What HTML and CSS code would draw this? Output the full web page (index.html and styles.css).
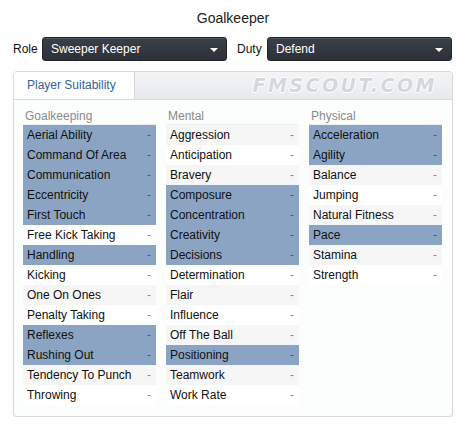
FILE: index.html
```html
<!DOCTYPE html>
<html>
<head>
<meta charset="utf-8">
<link rel="stylesheet" href="styles.css">
</head>
<body>
<div class="page">
  <h1 class="title">Goalkeeper</h1>
  <div class="controls">
    <span class="label">Role</span>
    <div class="select"><span>Sweeper Keeper</span><span class="caret"></span></div>
    <span class="label duty">Duty</span>
    <div class="select"><span>Defend</span><span class="caret"></span></div>
  </div>
  <div class="panel">
    <div class="tabs">
      <div class="tab">Player Suitability</div>
      <div class="watermark">FMSCOUT.COM</div>
    </div>
    <div class="columns">
      <div class="col">
        <div class="head">Goalkeeping</div>
        <div class="row hl"><span>Aerial Ability</span><span class="d">-</span></div>
        <div class="row hl"><span>Command Of Area</span><span class="d">-</span></div>
        <div class="row hl"><span>Communication</span><span class="d">-</span></div>
        <div class="row hl"><span>Eccentricity</span><span class="d">-</span></div>
        <div class="row hl"><span>First Touch</span><span class="d">-</span></div>
        <div class="row"><span>Free Kick Taking</span><span class="d">-</span></div>
        <div class="row hl"><span>Handling</span><span class="d">-</span></div>
        <div class="row"><span>Kicking</span><span class="d">-</span></div>
        <div class="row"><span>One On Ones</span><span class="d">-</span></div>
        <div class="row"><span>Penalty Taking</span><span class="d">-</span></div>
        <div class="row hl"><span>Reflexes</span><span class="d">-</span></div>
        <div class="row hl"><span>Rushing Out</span><span class="d">-</span></div>
        <div class="row"><span>Tendency To Punch</span><span class="d">-</span></div>
        <div class="row"><span>Throwing</span><span class="d">-</span></div>
      </div>
      <div class="col">
        <div class="head">Mental</div>
        <div class="row"><span>Aggression</span><span class="d">-</span></div>
        <div class="row"><span>Anticipation</span><span class="d">-</span></div>
        <div class="row"><span>Bravery</span><span class="d">-</span></div>
        <div class="row hl"><span>Composure</span><span class="d">-</span></div>
        <div class="row hl"><span>Concentration</span><span class="d">-</span></div>
        <div class="row hl"><span>Creativity</span><span class="d">-</span></div>
        <div class="row hl"><span>Decisions</span><span class="d">-</span></div>
        <div class="row"><span>Determination</span><span class="d">-</span></div>
        <div class="row"><span>Flair</span><span class="d">-</span></div>
        <div class="row"><span>Influence</span><span class="d">-</span></div>
        <div class="row"><span>Off The Ball</span><span class="d">-</span></div>
        <div class="row hl"><span>Positioning</span><span class="d">-</span></div>
        <div class="row"><span>Teamwork</span><span class="d">-</span></div>
        <div class="row"><span>Work Rate</span><span class="d">-</span></div>
      </div>
      <div class="col">
        <div class="head">Physical</div>
        <div class="row hl"><span>Acceleration</span><span class="d">-</span></div>
        <div class="row hl"><span>Agility</span><span class="d">-</span></div>
        <div class="row"><span>Balance</span><span class="d">-</span></div>
        <div class="row"><span>Jumping</span><span class="d">-</span></div>
        <div class="row"><span>Natural Fitness</span><span class="d">-</span></div>
        <div class="row hl"><span>Pace</span><span class="d">-</span></div>
        <div class="row"><span>Stamina</span><span class="d">-</span></div>
        <div class="row"><span>Strength</span><span class="d">-</span></div>
      </div>
    </div>
  </div>
</div>
</body>
</html>
```

FILE: styles.css
```css
html, body {
  margin: 0;
  padding: 0;
  background: #ffffff;
}
body {
  font-family: "Liberation Sans", Arial, sans-serif;
  color: #111;
  font-size: 12px;
}
.page {
  width: 466px;
  padding: 0 13px;
  box-sizing: border-box;
}
.title {
  margin: 0;
  padding-top: 10px;
  height: 28px;
  line-height: 17px;
  font-size: 14px;
  font-weight: normal;
  text-align: center;
  color: #222;
  box-sizing: border-box;
}
.controls {
  display: flex;
  align-items: center;
  height: 24px;
  margin-top: 9px;
}
.label {
  font-size: 12px;
  color: #111;
  width: 29px;
}
.label.duty {
  margin-left: 10px;
  width: 30px;
}
.select {
  width: 185px;
  height: 24px;
  box-sizing: border-box;
  border-radius: 3px;
  background: linear-gradient(#3a4048, #2c3138);
  border: 1px solid #23272c;
  box-shadow: inset 0 1px 0 #4b525b;
  color: #fff;
  display: flex;
  align-items: center;
  justify-content: space-between;
  padding: 0 8px 0 8px;
  font-size: 12px;
}
.caret {
  width: 0;
  height: 0;
  border-left: 4px solid transparent;
  border-right: 4px solid transparent;
  border-top: 4px solid #fff;
  margin-top: 1px;
}
.panel {
  margin-top: 10px;
  border: 1px solid #d9d9d9;
  border-radius: 4px;
  background: #fcfdfd;
  box-shadow: 0 1px 1px rgba(0,0,0,0.08);
  padding-bottom: 11px;
  overflow: hidden;
}
.tabs {
  height: 27px;
  display: flex;
  background: linear-gradient(#f3f4f6, #e9eaee);
  border-bottom: 1px solid #dcdcdc;
}
.tab {
  width: 121px;
  background: #fff;
  border-right: 1px solid #d6d6d6;
  color: #2f5f9e;
  font-size: 12px;
  line-height: 27px;
  padding-left: 13px;
  box-sizing: border-box;
}
.watermark {
  flex: 1;
  text-align: right;
  padding-right: 15px;
  font-family: "DejaVu Sans", sans-serif;
  font-weight: bold;
  font-style: italic;
  font-size: 19px;
  letter-spacing: 2.5px;
  line-height: 27px;
  color: #d4d7dc;
  text-shadow: 0 1px 0 #fff, 0 -1px 0 #fff, 1px 0 0 #fff, -1px 0 0 #fff;
}
.columns {
  display: grid;
  grid-template-columns: 133px 133px 133px;
  column-gap: 10px;
  padding: 0 0 0 9px;
}
.head {
  height: 25px;
  padding-top: 10px;
  box-sizing: border-box;
  line-height: 12px;
  color: #8a8a8a;
  padding-left: 2px;
  border-bottom: 1px solid #f0f0f0;
}
.row {
  height: 20px;
  line-height: 20px;
  display: flex;
  justify-content: space-between;
  padding: 0 5px 0 4px;
  color: #111;
  background: #fff;
}
.row:nth-child(even) {
  background: #f6f6f6;
}
.row.hl {
  background: #8ba4c3;
  color: #111;
}
.d {
  color: #8a8a8a;
}
.row.hl .d {
  color: #4c5b6c;
}
```
